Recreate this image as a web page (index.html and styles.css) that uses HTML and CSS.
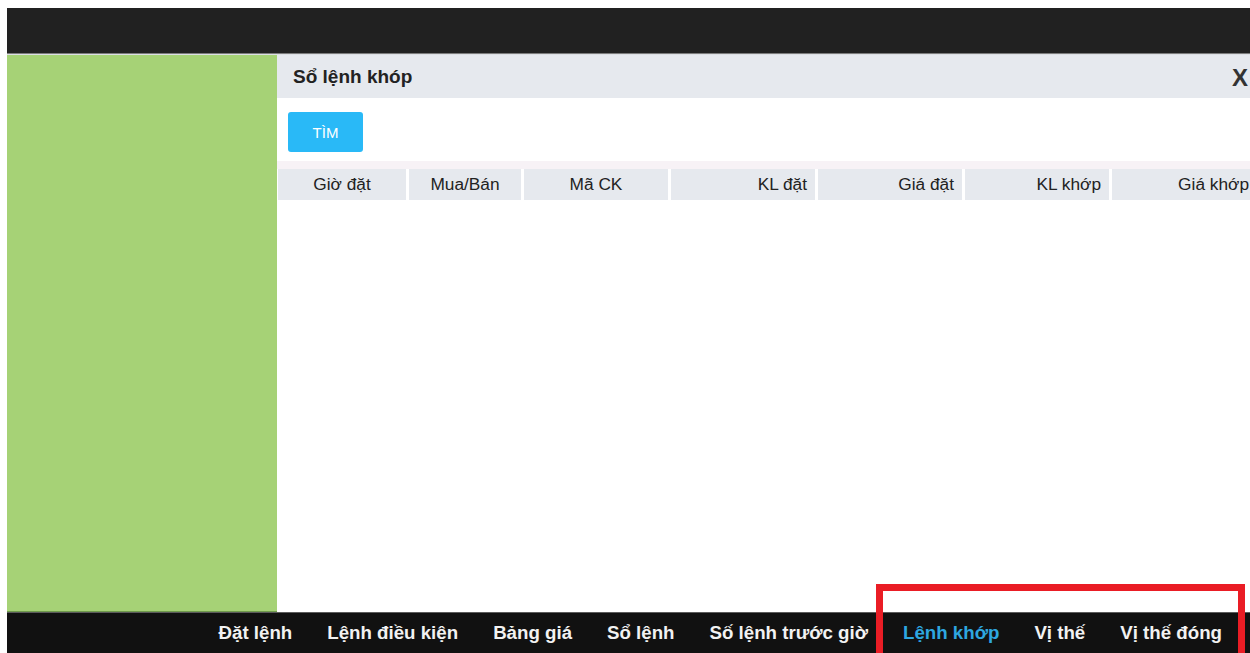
FILE: index.html
```html
<!DOCTYPE html>
<html lang="vi">
<head>
<meta charset="utf-8">
<title>Sổ lệnh khớp</title>
<link rel="stylesheet" href="styles.css">
</head>
<body>
  <header class="topbar"></header>

  <main class="workspace">
    <aside class="sidebar"></aside>

    <section class="dialog">
      <div class="dialog-head">
        <h1 class="dialog-title">Sổ lệnh khóp</h1>
        <span class="dialog-close">X</span>
      </div>

      <div class="toolbar">
        <button class="btn-search" type="button">TÌM</button>
      </div>

      <div class="grid-top"></div>
      <div class="grid-head">
        <div class="col col-time center">Giờ đặt</div>
        <div class="col col-side center">Mua/Bán</div>
        <div class="col col-code center">Mã CK</div>
        <div class="col col-num right">KL đặt</div>
        <div class="col col-num right">Giá đặt</div>
        <div class="col col-num right">KL khớp</div>
        <div class="col col-last right">Giá khớp</div>
      </div>
      <div class="grid-body"></div>
    </section>
  </main>

  <nav class="bottombar">
    <a class="nav-item">Đặt lệnh</a>
    <a class="nav-item">Lệnh điều kiện</a>
    <a class="nav-item">Bảng giá</a>
    <a class="nav-item">Sổ lệnh</a>
    <a class="nav-item">Số lệnh trước giờ</a>
    <span class="nav-group">
      <a class="nav-item active">Lệnh khớp</a>
      <a class="nav-item">Vị thế</a>
      <a class="nav-item">Vị thế đóng</a>
    </span>
  </nav>
</body>
</html>
```

FILE: styles.css
```css
html, body {
  overflow: hidden;
}

body {
  margin: 8px 0 0 7px;
  height: 645px;
  display: flex;
  flex-direction: column;
  background: #ffffff;
  font-family: "Liberation Sans", Arial, sans-serif;
  color: #222;
}

/* top application bar */
.topbar {
  height: 45px;
  flex-shrink: 0;
  background: #212121;
  border-bottom: 1px solid #7c7c7c;
}

.workspace {
  flex: 1;
  display: flex;
  min-height: 0;
  border-top: 1px solid #dcdfe3;
}

.sidebar {
  width: 270px;
  flex-shrink: 0;
  background: #a6d276;
  border-bottom: 1px solid #6f9a4c;
}

/* matched-orders dialog */
.dialog {
  width: 985px;
  flex-shrink: 0;
  background: #fff;
  display: flex;
  flex-direction: column;
}

.dialog-head {
  height: 43px;
  background: #e6e9ee;
  display: flex;
  align-items: center;
  justify-content: space-between;
  padding: 0 0 0 16px;
}

.dialog-title {
  margin: 0;
  font-size: 19px;
  font-weight: bold;
  color: #222;
}

.dialog-close {
  width: 30px;
  font-size: 24px;
  font-weight: bold;
  color: #333;
  margin-top: 2px;
}

.toolbar {
  height: 63px;
  padding: 14px 0 0 11px;
  box-sizing: border-box;
}

.btn-search {
  width: 75px;
  height: 40px;
  border: 0;
  border-radius: 3px;
  background: #29b9f7;
  color: #fff;
  font-family: "Liberation Sans", Arial, sans-serif;
  font-size: 15px;
  padding: 0;
}

.grid-top {
  height: 8px;
  background: #f7f2f6;
}

.grid-head {
  display: flex;
  gap: 3px;
  padding-left: 1px;
}

.col {
  height: 31px;
  line-height: 31px;
  background: #e6e9ee;
  font-size: 17.3px;
  color: #222;
  box-sizing: border-box;
  flex-shrink: 0;
}

.col.center { text-align: center; }
.col.right { text-align: right; padding-right: 8px; }

.col-time { width: 128px; }
.col-side { width: 112px; }
.col-code { width: 144px; }
.col-num  { width: 144px; }
.col-last { width: 145px; }

.grid-body {
  flex: 1;
}

/* bottom navigation */
.bottombar {
  height: 40px;
  flex-shrink: 0;
  background: #111111;
  border-top: 1px solid #5c5c5c;
  display: flex;
  justify-content: flex-end;
  gap: 35px;
  padding-right: 28px;
}

.nav-group {
  position: relative;
  display: flex;
  gap: 35px;
}

/* highlight frame around the position tabs */
.nav-group::after {
  content: "";
  position: absolute;
  left: -27px;
  right: -23px;
  top: -29px;
  bottom: -12px;
  border: 7px solid #ea1d25;
  pointer-events: none;
}

.nav-item {
  line-height: 40px;
  font-size: 18.7px;
  font-weight: bold;
  color: #f2f2f2;
  white-space: nowrap;
}

.nav-item.active {
  color: #2ea7e0;
}
```
